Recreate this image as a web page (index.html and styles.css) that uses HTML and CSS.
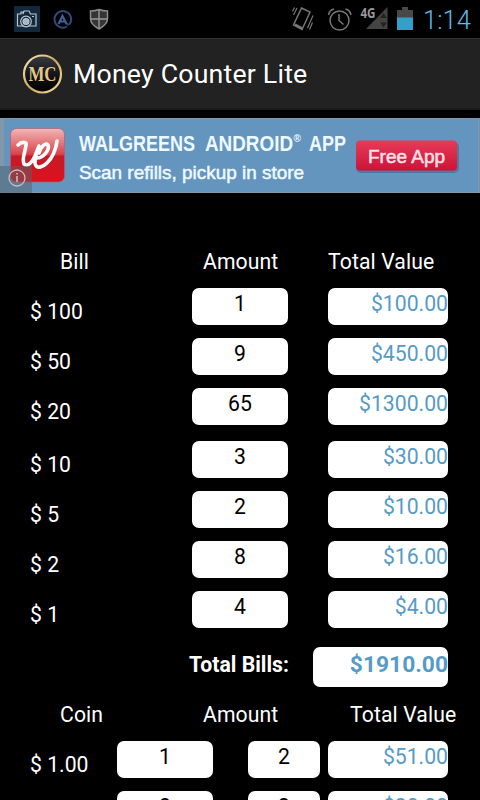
FILE: index.html
```html
<!DOCTYPE html>
<html lang="en">
<head>
<meta charset="utf-8">
<title>Money Counter Lite</title>
<link rel="stylesheet" href="styles.css">
</head>
<body>
<div class="status">
  <svg class="icons-left" width="120" height="38" viewBox="0 0 120 38" fill="none">
    <rect x="14" y="6" width="26" height="26" fill="#12283d"/>
    <g stroke="#b9c6cf" stroke-width="1.2">
      <path d="M17.500 14h3.500v-2h2v2l1-3h5l1.500 3h5.500v12h-18.500z"/>
      <circle cx="26" cy="21.500" r="5.300" fill="#12283d"/>
      <circle cx="26" cy="21.500" r="3" fill="#a7b7c2"/>
      <path d="M32 16.500h2"/>
    </g>
    <g stroke="#334878" stroke-width="2">
      <path d="M67 26.500a8.300 8.300 0 1 1 3-3q-1.500 2-3.500 0"/>
      <path d="M58.500 24l4-8 4 8M60 21.500h5" stroke="#455e98" stroke-width="2.200"/>
    </g>
    <path d="M99 9.500q-4 1.500-8.500 1.500v8c0 5 5 8 8.500 10 3.500-2 8.500-5 8.500-10v-8q-4.500 0-8.500-1.500z" fill="#353535" stroke="#8b8b8b" stroke-width="1.500"/>
    <path d="M99 10v18M91 19h16" stroke="#999" stroke-width="1.400"/>
  </svg>
  <svg class="icons-right" width="140" height="38" viewBox="280 0 140 38" fill="none">
    <g stroke="#777" stroke-width="1.500">
      <path d="M301.500 8l8.500 4.200-8 17.300-8.500-4.500z"/>
      <path d="M295 24.500l7.500 4" stroke-width="2.500"/>
      <path d="M297 8l-3.500 7M294.500 7.500l-2 4M313 15.500l-5.500 12.500M312.500 22.500l-3 7" stroke-width="1.200"/>
      <circle cx="339.500" cy="20.500" r="9.500"/>
      <path d="M339 14v6.500l4.500 4M328.500 15q1-5 5.500-6M351 15q-1-5-5.500-6"/>
    </g>
    <path d="M387.500 7v22H366z" fill="#444"/>
    <path d="M380 18l3.500-5 3.500 5zM380 22.500l3.500 5 3.500-5z" fill="#222"/>
    <path d="M402 7h6v3h5v8h-16v-8h5z" fill="#484848"/>
    <path d="M397 17.500h16V30h-16z" fill="#32a0c8"/>
    <text x="360.500" y="17.500" class="net" textLength="15" lengthAdjust="spacingAndGlyphs">4G</text>
  </svg>
  <span class="clock">1:14</span>
</div>
<header class="bar">
  <svg width="42" height="42" viewBox="0 0 42 42">
    <defs>
      <linearGradient id="gold" x1="0" y1="0" x2="1" y2="1"><stop offset="0" stop-color="#f8ebc4"/><stop offset=".5" stop-color="#cfaa5c"/><stop offset="1" stop-color="#f5dfa0"/></linearGradient>
      <linearGradient id="gloss" x1="0" y1="0" x2="0" y2="1"><stop offset="0" stop-color="#3b3b43"/><stop offset=".5" stop-color="#15151a"/><stop offset="1" stop-color="#000"/></linearGradient>
    </defs>
    <circle cx="21.500" cy="21" r="18.500" fill="url(#gloss)" stroke="url(#gold)" stroke-width="2.200"/>
    <text x="21.500" y="27.500" class="mc" textLength="28" lengthAdjust="spacingAndGlyphs">MC</text>
  </svg>
  <h1>Money Counter Lite</h1>
</header>
<div class="ad">
  <svg width="480" height="75" viewBox="0 0 480 75">
    <defs>
      <linearGradient id="red" x1="0" y1="0" x2="0" y2="1"><stop offset="0" stop-color="#f3b6b6"/><stop offset=".48" stop-color="#d8454c"/><stop offset=".52" stop-color="#c51b26"/><stop offset="1" stop-color="#e0101d"/></linearGradient>
      <linearGradient id="btn" x1="0" y1="0" x2="0" y2="1"><stop offset="0" stop-color="#e63b58"/><stop offset="1" stop-color="#cb1438"/></linearGradient>
    </defs>
    <rect width="480" height="75" fill="#6495be"/>
    <path d="M0 .5h480M0 74.500h480M478.500 0v75" stroke="#8297a8"/>
    <path d="M0 0h4v48H0z" fill="#8298aa"/>
    <rect x="10.500" y="10.500" width="54" height="53.500" rx="6" fill="url(#red)" stroke="#a6637b" stroke-width=".7"/>
    <path d="M18 27q4-4 8-2c1 5-5 15-2 21q5 4 11-8l4-10q-4 10-4 17c1 7 8 4 12 0 6-6 9-14 10-22M37 40c6 0 13-8 11-13-2-3-7 1-9 8" fill="none" stroke="#fff" stroke-width="3.600" stroke-linecap="round" stroke-linejoin="round"/>
    <rect y="48" width="32" height="27" fill="#58616a" opacity=".5"/>
    <circle cx="17" cy="60" r="8" fill="none" stroke="#ccb9b9" stroke-width="1.300"/>
    <path d="M17 58v6M17 55v1.500" stroke="#ccb9b9" stroke-width="1.600"/>
    <text x="79" y="32.500" class="ad-title" textLength="116" lengthAdjust="spacingAndGlyphs">WALGREENS</text>
    <text x="205" y="32.500" class="ad-title" textLength="88" lengthAdjust="spacingAndGlyphs">ANDROID</text>
    <text x="293.500" y="24" class="reg">®</text>
    <text x="309" y="32.500" class="ad-title" textLength="37" lengthAdjust="spacingAndGlyphs">APP</text>
    <text x="79" y="60.500" class="ad-sub" textLength="225" lengthAdjust="spacingAndGlyphs">Scan refills, pickup in store</text>
    <rect x="356" y="24" width="103" height="31" rx="5" fill="#52698f" opacity=".7"/>
    <rect x="356" y="22.500" width="101" height="30" rx="4" fill="url(#btn)"/>
    <text x="368" y="44.500" class="ad-btn" textLength="77" lengthAdjust="spacingAndGlyphs">Free App</text>
  </svg>
</div>
<main>
  <div class="head bills"><span>Bill</span><span>Amount</span><span>Total Value</span></div>
  <div class="row"><span>$ 100</span><b class="amt">1</b><b class="val">$100.00</b></div>
  <div class="row"><span>$ 50</span><b class="amt">9</b><b class="val">$450.00</b></div>
  <div class="row gap"><span>$ 20</span><b class="amt">65</b><b class="val">$1300.00</b></div>
  <div class="row"><span>$ 10</span><b class="amt">3</b><b class="val">$30.00</b></div>
  <div class="row"><span>$ 5</span><b class="amt">2</b><b class="val">$10.00</b></div>
  <div class="row"><span>$ 2</span><b class="amt">8</b><b class="val">$16.00</b></div>
  <div class="row"><span>$ 1</span><b class="amt">4</b><b class="val">$4.00</b></div>
  <div class="total"><span>Total Bills:</span><b class="val">$1910.00</b></div>
  <div class="head coins"><span>Coin</span><span>Amount</span><span>Total Value</span></div>
  <div class="row coin"><span>$ 1.00</span><b class="amt">1</b><b class="amt">2</b><b class="val">$51.00</b></div>
  <div class="row coin"><span></span><b class="amt">2</b><b class="amt">3</b><b class="val">$30.00</b></div>
</main>
</body>
</html>
```

FILE: styles.css
```css
* { box-sizing: border-box; }
html, body { margin: 0; height: 800px; overflow: hidden; background: #000; }
body { width: 480px; font-family: Roboto, sans-serif; font-size: 21.2px; color: #fff; }
svg { display: block; flex: none; }

.status { height: 38px; display: flex; }
.icons-right { margin-left: 160px; }
.clock { margin-left: 3px; font-size: 25.5px; line-height: 40px; font-weight: 300; color: #5cbde8; white-space: nowrap; }
.net { font: bold 14px "Open Sans", sans-serif; fill: #999; }

.bar { height: 72px; padding-left: 21px; display: flex; align-items: center; background: #222; border-top: 1px solid #333; border-bottom: 2px solid #1b1b1b; }
.bar h1 { margin: 1px 0 0 10px; font-size: 26.7px; font-weight: 400; line-height: 36px; letter-spacing: .2px; white-space: nowrap; }
.mc { font: bold 20px "Liberation Serif", serif; fill: #e3c887; text-anchor: middle; }

.ad { margin-top: 8px; height: 75px; }
.ad-title { font: bold 22.5px "Liberation Sans", sans-serif; fill: #eef9ff; }
.reg { font: bold 10px "Liberation Sans", sans-serif; fill: #eef9ff; }
.ad-sub { font: 19px "Liberation Sans", sans-serif; fill: #eef9ff; stroke: #eef9ff; stroke-width: .5px; }
.ad-btn { font: 18.5px "Liberation Sans", sans-serif; fill: #ffe1ea; stroke: #ffe1ea; stroke-width: .5px; }

.head { display: grid; line-height: 30px; height: 30px; letter-spacing: .1px; padding-left: 60px; white-space: nowrap; }
.bills { margin: 54px 0 11px; grid-template-columns: 143px 125px 1fr; }
.coins { margin: 13px 0 11px; grid-template-columns: 143px 147px 1fr; }
.row { display: grid; grid-template-columns: 162px 96px 120px; justify-content: start; height: 37px; margin-bottom: 13px; padding-left: 30px; }
.row .val { margin-left: 40px; width: 120px; }
.row span { line-height: 48px; white-space: nowrap; }
.gap { margin-bottom: 16px; }
.coin { grid-template-columns: 87px 96px 72px 120px; }
.coin .amt + .amt { margin-left: 35px; width: 72px; }
.coin .val { margin-left: 43px; }
.amt, .val { display: block; height: 37px; border-radius: 7px; background: #fff; color: #000; line-height: 31px; text-align: center; font-weight: 400; }
.val { color: #559bc7; text-align: right; }
.total { display: flex; margin-top: 19px; padding-left: 189px; font-weight: 700; line-height: 35px; }
.total span { width: 124px; }
.total .val { width: 135px; height: 40px; font-weight: 700; font-size: 22.8px; line-height: 35px; }
```
